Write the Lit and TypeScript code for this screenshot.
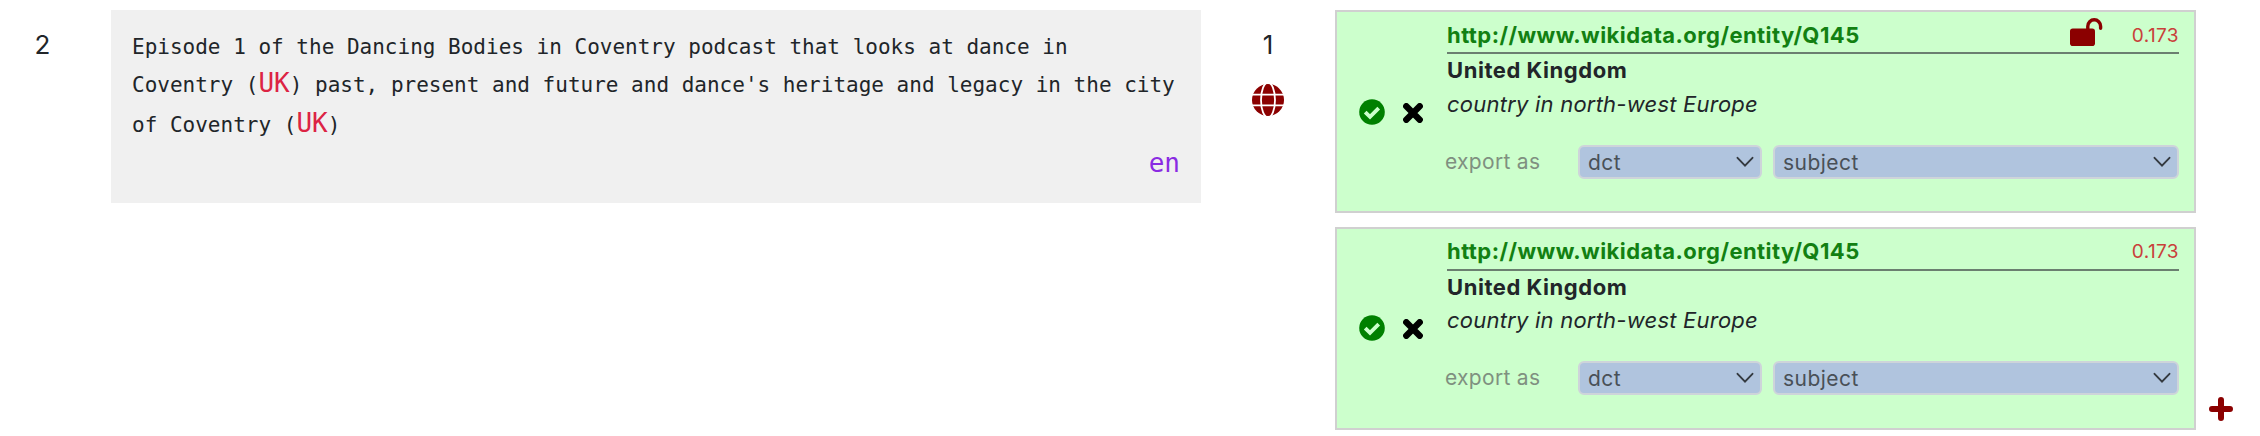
import { LitElement, html, css, svg, nothing } from "lit";
import { customElement, property } from "lit/decorators.js";

const globe = svg`<g fill="none" stroke="#fff" stroke-width="1.8"><circle cx="16" cy="16" r="16" fill="#8b0000" stroke="none"/><ellipse cx="16" cy="16" rx="7" ry="17.5"/><path d="M0 10.6H32M0 21.4H32"/></g>`;

@customElement("entity-card")
class EntityCard extends LitElement {
  @property() uri = "";
  @property() name = "";
  @property() description = "";
  @property() score = "";
  @property({ type: Boolean }) unlocked = false;
  static styles = css`
    :host { display: grid; grid-template-columns: 110px 1fr; box-sizing: border-box; height: 203px; border: 2px solid #d0d0d0; background: #ccffcc; font-family: Inter, sans-serif; font-size: 22px; color: #212529; padding-right: 15px; }
    .marks { display: flex; align-items: flex-start; padding: 86.8px 0 0 22px; gap: 18px; }
    .ok { width: 26px; height: 26px; }
    .no { width: 20px; height: 20px; margin-top: 4px; }
    .body { min-width: 0; }
    .head { display: flex; align-items: flex-start; box-sizing: border-box; height: 42px; border-bottom: 2px solid #6b7f70; }
    .uri { flex: 1; font-weight: 700; color: #128012; letter-spacing: 0.44px; line-height: 30px; padding-top: 7.8px; }
    .lock { width: 33px; height: 28px; margin: 6px 28px 0 0; }
    .score { width: 48px; text-align: right; letter-spacing: 0.4px; font-size: 19px; line-height: 30px; padding-top: 8.8px; color: #c9403a; }
    .name { font-weight: 700; line-height: 32px; height: 31.8px; letter-spacing: 0.54px; }
    .desc { font-style: italic; line-height: 36px; letter-spacing: 0.22px; }
    .export { display: flex; margin-top: 23px; height: 34px; }
    .label { width: 133px; margin-left: -2px; box-sizing: border-box; font-size: 21px; line-height: 33px; letter-spacing: 0.3px; color: #7f9080; white-space: nowrap; }
    .select { display: flex; justify-content: space-between; align-items: center; box-sizing: border-box; height: 34px; border: 2px solid #ced4da; border-radius: 6px; background: #b0c4de; color: #495057; font-size: 21px; letter-spacing: 0.45px; padding: 0 6px 0 8px; }
    .value { padding-top: 1.2px; }
    .ns { width: 184px; margin-right: 11px; }
    .prop { flex: 1; }
    .chev { width: 18px; height: 12px; }
  `;
  select(cls: string, value: string) {
    return html`<div class="select ${cls}"><span class="value">${value}</span><svg class="chev" viewBox="0 0 18 12"><path d="M1.5 1.8L9 9.6L16.5 1.8" fill="none" stroke="#343a40" stroke-width="1.9" stroke-linecap="round"/></svg></div>`;
  }
  render() {
    return html`
      <div class="marks">
        <svg class="ok" viewBox="0 0 26 26"><circle cx="13" cy="13" r="12.8" fill="#008000"/><path d="M6.2 13.2L11 17.9L19.7 9.2" fill="none" stroke="#ccffcc" stroke-width="3.8"/></svg>
        <svg class="no" viewBox="0 0 20 20"><path d="M3.3 3.3L16.7 16.7M16.7 3.3L3.3 16.7" stroke="#000" stroke-width="6.4" stroke-linecap="round"/></svg>
      </div>
      <div class="body">
        <div class="head"><span class="uri">${this.uri}</span>
          ${this.unlocked ? html`<svg class="lock" viewBox="0 0 33 28"><rect x="0" y="10.5" width="25" height="17.5" rx="2.8" fill="#8b0000"/><path d="M17.8 12V8.2a6.4 6.4 0 0 1 12.8 0V10.2" fill="none" stroke="#8b0000" stroke-width="3.4" stroke-linecap="round"/></svg>` : nothing}
          <span class="score">${this.score}</span></div>
        <div class="name">${this.name}</div>
        <div class="desc">${this.description}</div>
        <div class="export"><span class="label">export as</span>${this.select("ns", "dct")}${this.select("prop", "subject")}</div>
      </div>`;
  }
}

@customElement("app-root")
class AppRoot extends LitElement {
  static styles = css`
    :host { display: grid; grid-template-columns: 111px 1090px 134px 861px 1fr; width: 2260px; height: 436px; background: #fff; color: #212529; box-sizing: border-box; padding-top: 10px; font-family: "DejaVu Sans Mono", monospace; align-items: start; }
    .num { font: 26px/39px Inter, sans-serif; padding: 15px 0 0 34.5px; }
    .text { box-sizing: border-box; height: 193px; background: #f0f0f0; padding: 18px 21px; font-size: 21px; }
    .line { line-height: 34px; white-space: pre; height: 40px; }
    .first { line-height: 38px; height: 38px; }
    .hit { color: #dc2344; font-size: 26px; }
    .lang { font-size: 26px; color: #8a2be2; text-align: right; line-height: 34px; }
    .count { display: flex; flex-direction: column; align-items: center; font: 26px/39px Inter, sans-serif; padding-top: 15px; }
    .globe { width: 32px; height: 32px; margin-top: 20px; }
    .cards { display: grid; gap: 13.3px; padding-top: 0.3px; }
    .add { width: 24px; height: 24px; margin: 387px 0 0 13px; }
  `;
  render() {
    const card = (unlocked: boolean) => html`<entity-card uri="http://www.wikidata.org/entity/Q145" name="United Kingdom" description="country in north-west Europe" score="0.173" ?unlocked=${unlocked}></entity-card>`;
    return html`
      <div class="num">2</div>
      <div class="text">
        <div class="line first">Episode 1 of the Dancing Bodies in Coventry podcast that looks at dance in</div>
        <div class="line">Coventry (<span class="hit">UK</span>) past, present and future and dance's heritage and legacy in the city</div>
        <div class="line">of Coventry (<span class="hit">UK</span>)</div>
        <div class="lang">en</div>
      </div>
      <div class="count"><span>1</span><svg class="globe" viewBox="0 0 32 32">${globe}</svg></div>
      <div class="cards">${card(true)}${card(false)}</div>
      <svg class="add" viewBox="0 0 24 24"><path d="M3 12H21M12 3V21" stroke="#8b0000" stroke-width="6" stroke-linejoin="round" stroke-linecap="round"/></svg>`;
  }
}
